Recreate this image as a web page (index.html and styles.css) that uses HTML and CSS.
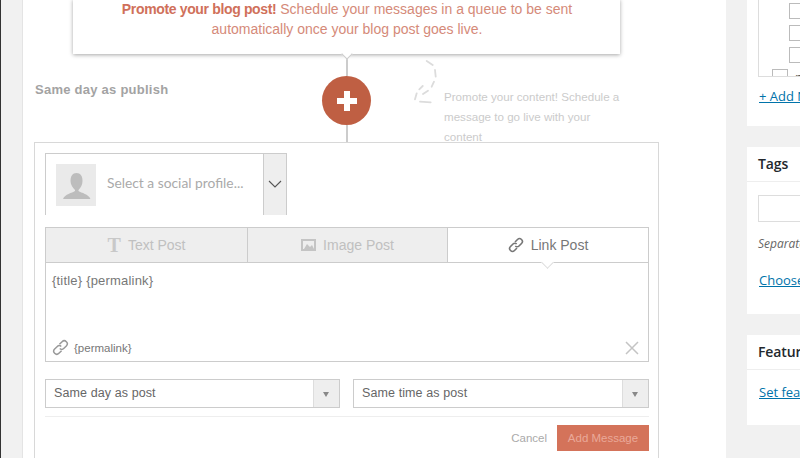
FILE: index.html
```html
<!DOCTYPE html>
<html lang="en">
<head>
    <meta charset="UTF-8">
    <meta name="viewport" content="width=device-width, initial-scale=1.0">
    <title>Edit Post</title>
    <link rel="stylesheet" href="styles.css">
</head>
<body>
    <div class="adminbar"></div>
    <div class="gutter-left"></div>

    <main class="post-area">
        <div class="promo">
            <p><b>Promote your blog post!</b> Schedule your messages in a queue to be sent<br>automatically once your blog post goes live.</p>
            <span class="promo-notch"></span>
        </div>

        <div class="timeline">
            <div class="day-label">Same day as publish</div>
            <div class="node">
                <span class="node-line"></span>
                <span class="node-circle">
                    <svg width="22" height="22" viewBox="0 0 22 22"><path d="M8 1h6v7h7v6h-7v7H8v-7H1V8h7z" fill="#fff"/></svg>
                </span>
                <span class="node-line"></span>
            </div>
            <div class="note">
                <svg class="note-curve" width="26" height="46" viewBox="0 0 26 46"><path d="M12.700 1L18.700 5M21 10l.7 6.700M20 21.700l-2.300 5M14 30.700l-5 3.300M8.700 26l-3.400 3.300M2.700 33.300L1 39.300M6 41.700l10.700.6" fill="none" stroke="#dcdcdc" stroke-width="1.800" stroke-linecap="round"/></svg>
                <p>Promote your content! Schedule a message to go live with your content</p>
            </div>
        </div>

        <section class="composer">
            <div class="profile-select">
                <div class="profile-main">
                    <span class="avatar">
                        <svg width="40" height="42" viewBox="0 0 40 42"><path d="M20.500 9c4 0 6 3 6 8 0 4-2 7-4 9v1c3 2 10 3 12 8H7c2-5 9-6 12-8v-1c-2-2-4.500-5-4.500-9 0-5 2-8 6-8z" fill="#bdbdbd"/></svg>
                    </span>
                    <span class="profile-text">Select a social profile...</span>
                </div>
                <div class="profile-arrow">
                    <svg width="14" height="8" viewBox="0 0 14 8"><path d="M1 1l6 6 6-6" fill="none" stroke="#555" stroke-width="1.100"/></svg>
                </div>
            </div>

            <div class="tabs">
                <div class="tab"><span class="tab-t">T</span>Text Post</div>
                <div class="tab">
                    <svg width="15" height="12" viewBox="0 0 15 12"><path d="M0 0h15v12H0z" fill="#c4c4c4"/><path d="M2 2h11v8H2z" fill="#eee"/><path d="M3 10l3-5 3 3 2-2 2 4z" fill="#c4c4c4"/></svg>
                    Image Post
                </div>
                <div class="tab tab-active">
                    <svg width="16" height="16" viewBox="0 0 16 16"><g fill="none" stroke="#777" stroke-width="1.600"><path d="M7 5l2.500-2.500a2.600 2.600 0 0 1 4 4L11 9a2.600 2.600 0 0 1-3.700 0"/><path d="M9 11l-2.500 2.500a2.600 2.600 0 0 1-4-4L5 7a2.600 2.600 0 0 1 3.700 0"/></g></svg>
                    Link Post
                    <span class="tab-notch"></span>
                </div>
            </div>

            <div class="message">
                <div class="message-text">{title} {permalink}</div>
                <div class="message-foot">
                    <svg width="17" height="17" viewBox="0 0 16 16"><g fill="none" stroke="#999" stroke-width="1.400"><path d="M7 5l2.500-2.500a2.600 2.600 0 0 1 4 4L11 9a2.600 2.600 0 0 1-3.700 0"/><path d="M9 11l-2.500 2.500a2.600 2.600 0 0 1-4-4L5 7a2.600 2.600 0 0 1 3.700 0"/></g></svg>
                    <span class="permalink">{permalink}</span>
                    <svg class="message-close" width="14" height="14" viewBox="0 0 14 14"><path d="M1 1l12 12M13 1L1 13" stroke="#c4c4c4" stroke-width="1.500"/></svg>
                </div>
            </div>

            <div class="selects">
                <div class="select"><span class="select-value">Same day as post</span><span class="select-arrow"></span></div>
                <div class="select"><span class="select-value">Same time as post</span><span class="select-arrow"></span></div>
            </div>

            <div class="actions">
                <span class="cancel">Cancel</span>
                <span class="add-btn">Add Message</span>
            </div>
        </section>
    </main>

    <div class="gutter-right"></div>

    <aside class="sidebar">
        <div class="box box-cats">
            <div class="cat-list">
                <span class="check"></span>
                <span class="check"></span>
                <span class="check"></span>
                <div class="cat-last"><span class="check"></span><span class="cat-name">n</span></div>
            </div>
            <a class="side-link add-new">+ Add New Category</a>
        </div>

        <div class="box box-tags">
            <h3>Tags</h3>
            <div class="box-body">
                <div class="tag-input"></div>
                <p class="hint">Separate tags with commas</p>
                <a class="side-link">Choose from the most used tags</a>
            </div>
        </div>

        <div class="box box-image">
            <h3>Featured Image</h3>
            <div class="box-body">
                <a class="side-link">Set featured image</a>
            </div>
        </div>
    </aside>
</body>
</html>
```

FILE: styles.css
```css
html, body {
    height: 458px;
    overflow: hidden;
}
body {
    display: flex;
    margin: 0;
    font-family: "Liberation Sans", Arial, sans-serif;
    background-color: #f1f1f1;
}
p {
    margin: 0;
}
svg {
    flex: none;
}

/* page frame */
.adminbar {
    flex: none;
    width: 1px;
    background: #333;
}
.gutter-left {
    flex: none;
    width: 21px;
    border-right: 1px solid #e4e4e4;
}
.post-area {
    flex: none;
    width: 703px;
    background: #fff;
}
.gutter-right {
    flex: none;
    width: 21px;
}

/* promo box */
.promo {
    position: relative;
    box-sizing: border-box;
    width: 547px;
    height: 55px;
    margin: -1px 0 0 50px;
    padding-left: 1px;
    text-align: center;
    font-size: 14px;
    line-height: 20px;
    color: #d58a79;
    background: #fff;
    box-shadow: 0 1px 4px rgba(0, 0, 0, 0.35);
}
.promo b {
    letter-spacing: -0.35px;
    color: #d0705a;
}
.promo-notch {
    position: absolute;
    left: 270px;
    bottom: -4px;
    width: 7px;
    height: 7px;
    background: #fff;
    border-right: 1px solid #ccc;
    border-bottom: 1px solid #ccc;
    transform: rotate(45deg);
}

/* timeline */
.timeline {
    display: grid;
    grid-template-columns: 299px 49px 1fr;
    height: 88px;
}
.day-label {
    padding: 28px 0 0 12px;
    font-size: 13px;
    font-weight: bold;
    letter-spacing: 0.25px;
    color: #a3a3a3;
}
.node {
    display: flex;
    flex-direction: column;
    align-items: center;
}
.node-line {
    flex: 1;
    width: 2px;
    background: #ccc;
}
.node-circle {
    display: flex;
    flex: none;
    align-items: center;
    justify-content: center;
    width: 49px;
    height: 49px;
    border-radius: 50%;
    background: #bf5f43;
}
.note {
    display: flex;
    padding-left: 43px;
}
.note-curve {
    margin-top: 6px;
}
.note p {
    width: 180px;
    margin: 33px 0 0 4px;
    font-size: 11.6px;
    line-height: 20px;
    color: #cbcbcb;
}

/* composer */
.composer {
    position: relative;
    box-sizing: border-box;
    width: 625px;
    height: 330px;
    margin-left: 11px;
    padding: 10px 9px 10px 10px;
    background: #fff;
    border: 1px solid #d8d8d8;
}
.profile-select {
    display: flex;
    width: 242px;
    height: 62px;
}
.profile-main {
    display: flex;
    flex: 1;
    align-items: flex-start;
    padding: 10px 0 0 10px;
    border-top: 1px solid #ccc;
    border-left: 1px solid #ccc;
}
.avatar {
    display: flex;
    width: 40px;
    height: 42px;
    background: #eaeaea;
}
.profile-text {
    margin-left: 11px;
    font-family: Lato, sans-serif;
    font-size: 13.8px;
    line-height: 38px;
    color: #aaa;
}
.profile-arrow {
    display: flex;
    flex: none;
    align-items: flex-start;
    justify-content: center;
    width: 24px;
    padding-top: 26px;
    box-sizing: border-box;
    background: #eee;
    border: 1px solid #ccc;
    border-bottom: none;
}

/* tabs */
.tabs {
    display: grid;
    grid-template-columns: 202px 200px 1fr;
    height: 36px;
    margin-top: 12px;
    border: 1px solid #ccc;
    box-sizing: border-box;
}
.tab {
    display: flex;
    align-items: center;
    justify-content: center;
    gap: 7px;
    font-size: 14px;
    color: #c0c0c0;
    background: #eee;
    border-right: 1px solid #ccc;
}
.tab-t {
    font-family: "Liberation Serif", serif;
    font-size: 20px;
    font-weight: bold;
    line-height: 1;
    color: #c8c8c8;
}
.tab-active {
    position: relative;
    color: #777;
    background: #fff;
    border-right: none;
}
.tab-notch {
    position: absolute;
    left: 95px;
    bottom: -5px;
    width: 8px;
    height: 8px;
    background: #fff;
    border-right: 1px solid #ddd;
    border-bottom: 1px solid #ddd;
    transform: rotate(45deg);
}
.message {
    display: flex;
    flex-direction: column;
    justify-content: space-between;
    box-sizing: border-box;
    height: 99px;
    padding: 9px 9px 5px 6px;
    border: 1px solid #ccc;
    border-top: none;
}
.message-text {
    font-size: 13px;
    line-height: 18px;
    letter-spacing: 0.2px;
    color: #777;
}
.message-foot {
    display: flex;
    align-items: center;
    gap: 5px;
}
.permalink {
    font-size: 11.5px;
    color: #777;
}
.message-close {
    margin-left: auto;
}

/* day and time selects */
.selects {
    display: grid;
    grid-template-columns: 295px 296px;
    gap: 13px;
    margin-top: 17px;
}
.select {
    display: flex;
    box-sizing: border-box;
    height: 29px;
    border: 1px solid #ccc;
}
.select-value {
    flex: 1;
    padding-left: 8px;
    font-size: 12.5px;
    line-height: 26px;
    letter-spacing: 0.1px;
    color: #666;
}
.select-arrow {
    position: relative;
    width: 25px;
    background: #eee;
    border-left: 1px solid #ddd;
}
.select-arrow::after {
    content: "";
    position: absolute;
    left: 9px;
    top: 12px;
    border-top: 5px solid #888;
    border-left: 3px solid transparent;
    border-right: 3px solid transparent;
}
.actions {
    display: flex;
    align-items: center;
    justify-content: flex-end;
    gap: 10px;
    margin-top: 8px;
    padding-top: 8px;
    border-top: 1px solid #eee;
}
.cancel {
    font-size: 11.5px;
    color: #aaa;
}
.add-btn {
    box-sizing: border-box;
    width: 92px;
    height: 26px;
    font-size: 11.5px;
    line-height: 26px;
    text-align: center;
    color: #eaa999;
    background: #d4735a;
}

/* sidebar */
.sidebar {
    flex: none;
    display: flex;
    flex-direction: column;
    gap: 21px;
    width: 53px;
    overflow: hidden;
    font-family: "Open Sans", sans-serif;
}
.box {
    flex: none;
    width: 280px;
    background: #fff;
}
.box h3 {
    margin: 0;
    padding: 0 11px;
    height: 34px;
    font-size: 14px;
    font-weight: 600;
    line-height: 34px;
    letter-spacing: -0.1px;
    color: #23282d;
    border-bottom: 1px solid #eee;
}
.box-body {
    padding: 0 11px;
}
.box-cats {
    height: 126px;
    padding-left: 11px;
    box-sizing: border-box;
}
.cat-list {
    display: flex;
    flex-direction: column;
    align-items: flex-start;
    gap: 6px;
    box-sizing: border-box;
    height: 77px;
    padding: 3px 0 0 30px;
    overflow: hidden;
    border-left: 1px solid #ddd;
    border-bottom: 1px solid #ddd;
}
.check {
    flex: none;
    box-sizing: border-box;
    width: 16px;
    height: 16px;
    border: 1px solid #bbb;
    background: #fff;
}
.cat-last {
    display: flex;
    gap: 7px;
    margin-left: -17px;
    font-size: 13px;
    line-height: 16px;
    color: #555;
}
.side-link {
    display: block;
    margin-left: 1px;
    font-size: 13px;
    white-space: nowrap;
    color: #0073aa;
    text-decoration: underline;
}
.add-new {
    margin-top: 10px;
}
.box-tags {
    height: 167px;
}
.tag-input {
    box-sizing: border-box;
    height: 27px;
    margin-top: 13px;
    border: 1px solid #ddd;
}
.hint {
    margin: 13px 0 19px;
    font-size: 12px;
    font-style: italic;
    white-space: nowrap;
    color: #666;
}
.box-image {
    height: 90px;
}
.box-image .box-body {
    padding-top: 13px;
}
```
